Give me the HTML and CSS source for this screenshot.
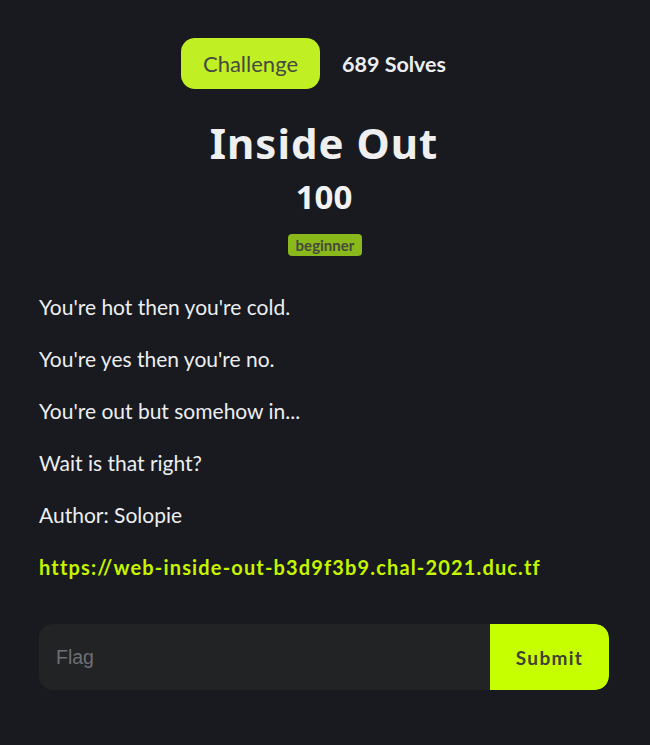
FILE: index.html
```html
<!DOCTYPE html>
<html>
<head>
<meta charset="utf-8">
<link rel="stylesheet" href="styles.css">
</head>
<body>
<div class="modal">
  <div class="head">
    <span class="tab">Challenge</span>
    <span class="solves">689 Solves</span>
  </div>
  <h1 class="title">Inside Out</h1>
  <div class="points">100</div>
  <div class="tags"><span class="tag">beginner</span></div>
  <div class="desc">
    <p>You're hot then you're cold.</p>
    <p>You're yes then you're no.</p>
    <p>You're out but somehow in...</p>
    <p>Wait is that right?</p>
    <p>Author: Solopie</p>
    <p><a class="link" href="#">https://web-inside-out-b3d9f3b9.chal-2021.duc.tf</a></p>
  </div>
  <form class="flag">
    <input class="flag-input" type="text" placeholder="Flag">
    <button class="submit" type="button">Submit</button>
  </form>
</div>
</body>
</html>
```
FILE: styles.css
```css
html, body {
  margin: 0;
  padding: 0;
  background: #181a1f;
}
.modal {
  width: 650px;
  height: 745px;
  box-sizing: border-box;
  padding: 38px 41px 0 39px;
  background: #181a1f;
  font-family: "Lato", sans-serif;
  color: #eceef0;
}
.head {
  display: flex;
  align-items: center;
  gap: 22px;
  padding-left: 142px;
}
.tab {
  display: inline-flex;
  align-items: center;
  justify-content: center;
  width: 139px;
  height: 51px;
  border-radius: 14px;
  background: #c0ef24;
  color: #474a40;
  font-family: "Lato", sans-serif;
  font-size: 22px;
}
.solves {
  font-size: 21.5px;
  font-weight: 700;
  color: #eceef0;
  margin-top: 0;
}
.title {
  margin: 28px 0 0;
  text-align: center;
  font-family: "Noto Sans", sans-serif;
  font-weight: 700;
  font-size: 42px;
  line-height: 52px;
  letter-spacing: 1px;
  color: #efefef;
}
.points {
  text-align: center;
  font-family: "Noto Sans", sans-serif;
  font-weight: 700;
  font-size: 33px;
  line-height: 40px;
  margin-top: 8px;
  color: #f2f2f2;
}
.tags {
  display: flex;
  justify-content: center;
  margin-top: 17px;
  margin-left: 2px;
}
.tag {
  background: #8ab91b;
  color: #464a3c;
  font-weight: 700;
  font-size: 15px;
  line-height: 22px;
  padding: 0 8px;
  border-radius: 4px;
}
.desc {
  margin-top: 36px;
}
.desc p {
  margin: 0 0 22px;
  font-size: 21px;
  line-height: 30px;
  color: #eceef0;
}
.desc p:last-child {
  margin-bottom: 0;
}
.link {
  color: #c6f500;
  text-decoration: none;
  font-weight: 700;
  font-size: 20px;
  letter-spacing: 1.15px;
}
.flag {
  display: flex;
  margin: 42px 0 0;
  height: 66px;
  border-radius: 14px;
  overflow: hidden;
  background: #222325;
}
.flag-input {
  flex: 1;
  border: 0;
  background: transparent;
  padding: 0 17px;
  font-family: "Liberation Sans", sans-serif;
  font-size: 19.5px;
  color: #ddd;
  outline: none;
}
.flag-input::placeholder {
  color: #6c6f74;
}
.submit {
  width: 119px;
  border: 0;
  background: #c6ff00;
  color: #3f4238;
  font-family: "Lato", sans-serif;
  font-weight: 700;
  font-size: 19px;
  letter-spacing: 1.3px;
  border-radius: 0 14px 14px 0;
}
```
